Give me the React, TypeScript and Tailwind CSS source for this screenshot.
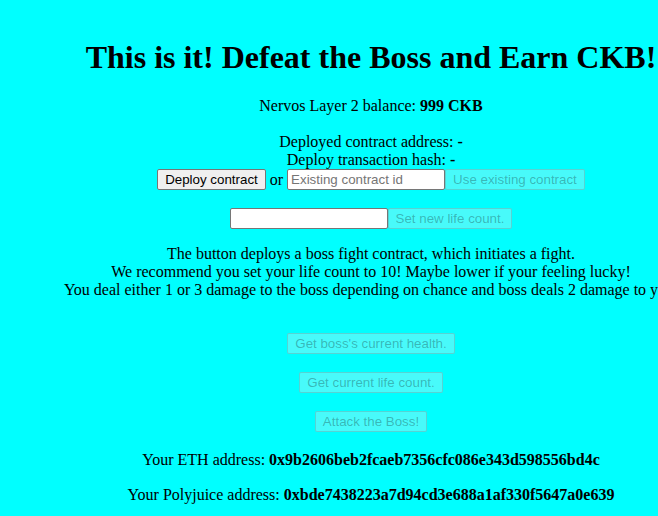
import React from "react";

const serif = "font-['Liberation_Serif','Times_New_Roman',serif]";
const btnBase =
  "h-[21px] px-[7px] rounded-[2px] border text-[13.333px] leading-[15px] font-['Liberation_Sans',Arial,sans-serif] align-middle";
const btnEnabled = `${btnBase} bg-[#efefef] border-[#767676] text-black`;
const btnDisabled = `${btnBase} bg-[rgba(239,239,239,0.3)] border-[rgba(118,118,118,0.3)] text-[rgba(16,16,16,0.3)]`;
const inputCls =
  "h-[21px] w-[158px] px-[3px] bg-white border border-[#767676] rounded-[2px] text-[13.333px] font-['Liberation_Sans',Arial,sans-serif] text-black placeholder:text-[#757575] outline-none align-middle";

export default function App() {
  return (
    <div className={`w-full min-h-[516px] bg-[#00ffff] overflow-hidden ${serif} text-black`}>
      <div className="w-[742px] text-center pt-[39px] pb-[20px]">
        <h1 className="h-[37px] leading-[37px] text-[32px] font-bold">
          This is it! Defeat the Boss and Earn CKB!
        </h1>
        <div className="mt-[21px] h-[18px] leading-[18px] text-[16px]">
          Nervos Layer 2 balance: <b>999 CKB</b>
        </div>
        <div className="mt-[18px] h-[18px] leading-[18px] text-[16px]">
          Deployed contract address: <b>-</b>
        </div>
        <div className="h-[18px] leading-[18px] text-[16px]">
          Deploy transaction hash: <b>-</b>
        </div>
        <div className="h-[21px] flex justify-center items-center text-[16px]">
          <button className={btnEnabled}>Deploy contract</button>
          <span className="px-[4px]">or</span>
          <input className={inputCls} placeholder="Existing contract id" />
          <button className={btnDisabled} disabled>
            Use existing contract
          </button>
        </div>
        <div className="mt-[18px] h-[21px] flex justify-center items-center">
          <input className={inputCls} />
          <button className={btnDisabled} disabled>
            Set new life count.
          </button>
        </div>
        <div className="mt-[16px] text-[16px] leading-[18px] whitespace-nowrap">
          <div>The button deploys a boss fight contract, which initiates a fight.</div>
          <div>We recommend you set your life count to 10! Maybe lower if your feeling lucky!</div>
          <div>
            You deal either 1 or 3 damage to the boss depending on chance and boss deals 2 damage to you.
          </div>
        </div>
        <div className="mt-[34px] h-[21px] flex justify-center">
          <button className={btnDisabled} disabled>
            Get boss's current health.
          </button>
        </div>
        <div className="mt-[18px] h-[21px] flex justify-center">
          <button className={btnDisabled} disabled>
            Get current life count.
          </button>
        </div>
        <div className="mt-[18px] h-[21px] flex justify-center">
          <button className={btnDisabled} disabled>
            Attack the Boss!
          </button>
        </div>
        <div className="mt-[19px] h-[18px] leading-[18px] text-[16px]">
          Your ETH address: <b>0x9b2606beb2fcaeb7356cfc086e343d598556bd4c</b>
        </div>
        <div className="mt-[17px] h-[18px] leading-[18px] text-[16px]">
          Your Polyjuice address: <b>0xbde7438223a7d94cd3e688a1af330f5647a0e639</b>
        </div>
      </div>
    </div>
  );
}
